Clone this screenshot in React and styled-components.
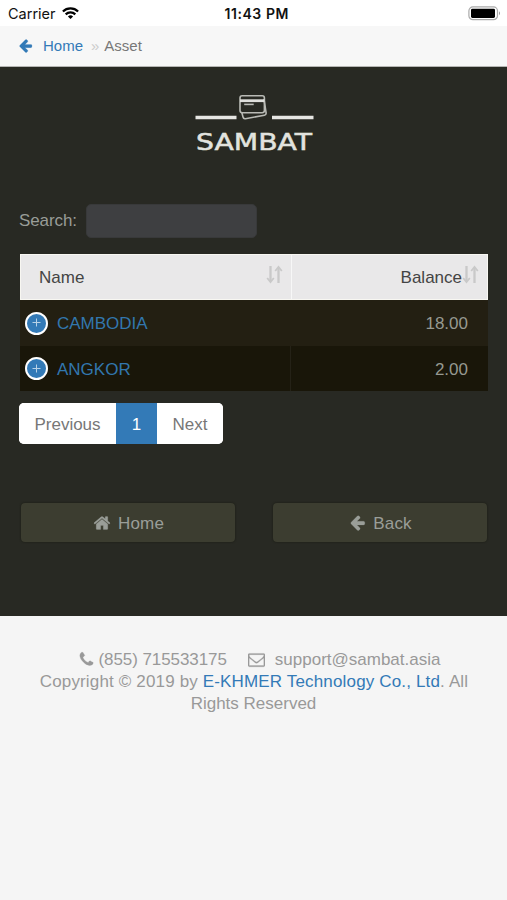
import React from "react";
import styled, { createGlobalStyle } from "styled-components";

const GlobalStyle = createGlobalStyle`
  * { box-sizing: border-box; }
  body { margin: 0; background: #f5f5f5; }
`;

const Page = styled.div`
  width: 507px;
  min-height: 900px;
  background: #f5f5f5;
  color: #999;
  font-family: "Liberation Sans", Arial, sans-serif;
  font-size: 17px;
  line-height: 22px;
`;

const StatusBar = styled.header`
  display: grid;
  grid-template-columns: 1fr auto 1fr;
  align-items: center;
  height: 26px;
  padding: 1px 6px 0 8px;
  background: #fff;
  color: #111;
  font: 14.5px/20px Inter, sans-serif;
`;
const Carrier = styled.div`
  display: flex;
  align-items: center;
  gap: 6px;
`;
const Clock = styled.div`
  padding-left: 4px;
  font-size: 14px;
  font-weight: 600;
  letter-spacing: 0.55px;
  margin-right: -0.5px;
`;
const BatterySlot = styled.div`
  display: flex;
  justify-content: flex-end;
`;

const Breadcrumb = styled.nav`
  display: flex;
  align-items: center;
  height: 41px;
  padding-left: 18px;
  background: #f7f7f7;
  border-bottom: 1px solid #b5b5b3;
  color: #777;
  font-size: 15px;
`;
const Crumb = styled.a`
  color: #337ab7;
  margin-left: 10px;
`;
const Separator = styled.span`
  color: #ccc;
  margin: 0 5px 0 8px;
`;

const Main = styled.main`
  height: 549px;
  padding: 25px 19px 0;
  background: #282923;
`;
const Brand = styled.div`
  display: flex;
  justify-content: center;
  height: 112px;
`;

const SearchRow = styled.label`
  display: flex;
  align-items: center;
  gap: 9px;
  height: 34px;
  color: #999d98;
  letter-spacing: -0.1px;
`;
const SearchInput = styled.input`
  width: 171px;
  height: 34px;
  padding: 0 12px;
  border: 1px solid #38393a;
  border-radius: 5px;
  background: #3e3f41;
  color: #ccc;
  font: inherit;
  outline: none;
`;

const Table = styled.div`
  width: 469px;
  margin-top: 16px;
  padding-left: 1px;
`;
const Row = styled.div`
  display: grid;
  grid-template-columns: 271px 197px;
  height: ${(p) => (p.$odd ? "46px" : "45px")};
  background: ${(p) => (p.$odd ? "#231f12" : "#191609")};
  color: #969990;
`;
const HeadRow = styled(Row)`
  height: 46px;
  background: #e9e8e9;
  border: 1px solid #f8f7f2;
  grid-template-columns: 271px 195px;
  color: #444;
`;
const Cell = styled.div`
  display: flex;
  align-items: center;
  padding: 2px 20px 0 5px;
  border-right: ${(p) => (p.$divided ? "1px solid #252217" : "0")};
  justify-content: ${(p) => (p.$end ? "flex-end" : "flex-start")};
`;
const HeadCell = styled(Cell)`
  justify-content: ${(p) => (p.$end ? "flex-end" : "space-between")};
  padding: 2px 8px 0 18px;
  border-right: ${(p) => (p.$end ? "0" : "1px solid #f7f7f7")};
`;
const SortMark = styled.svg`
  margin-bottom: 7px;
`;
const Expand = styled.span`
  display: flex;
  width: 23px;
  height: 23px;
  align-items: center;
  justify-content: center;
  border: 2.5px solid #fff;
  border-radius: 50%;
  background: #337ab7;
  margin: 0 9px 2px 0;
`;
const Link = styled.a`
  color: ${(p) => (p.$dim ? "#3277ae" : "#337ab7")};
`;

const Pagination = styled.div`
  display: flex;
  width: 204px;
  height: 41px;
  margin-top: 12px;
  overflow: hidden;
  border-radius: 5px;
  background: #fff;
`;
const PageButton = styled.button`
  width: ${(p) => p.$width}px;
  padding: 2px 0 0;
  border: 0;
  background: ${(p) => (p.$active ? "#337ab7" : "#fff")};
  color: ${(p) => (p.$active ? "#fff" : "#777")};
  font: inherit;
`;

const Actions = styled.div`
  display: flex;
  justify-content: space-between;
  padding-left: 2px;
  padding-right: 1px;
  margin-top: 59px;
`;
const ActionButton = styled.button`
  display: flex;
  align-items: center;
  justify-content: center;
  gap: 7px;
  width: 214px;
  height: 39px;
  padding: 2px 0 0 1px;
  border: 0;
  border-radius: 4px;
  background: #3c3d30;
  box-shadow: 0 0 2px #171811;
  color: #9a9e98;
  font: inherit;
  letter-spacing: 0.2px;
`;

const Footer = styled.footer`
  padding: 33px 30px 0;
  text-align: center;
`;
const Contact = styled.div`
  display: flex;
  justify-content: center;
  align-items: center;
  height: 22px;
  padding-left: 11px;
`;
const Phone = styled.span`
  margin: 0 21px 0 4px;
  letter-spacing: -0.08px;
`;
const Mail = styled.span`
  margin-left: 10px;
`;
const Copyright = styled.div`
  padding-left: ${(p) => (p.$wide ? "1px" : "0")};
  letter-spacing: ${(p) => (p.$wide ? "0.155px" : "0")};
`;

const iconPaths = {
  home: "M1472 992v480q0 26-19 45t-45 19h-384v-384h-256v384h-384q-26 0-45-19t-19-45v-480q0-1 .5-3t.5-3l575-474 575 474q1 2 1 6zm223-69l-62 74q-8 9-21 11h-3q-13 0-21-7l-692-577-692 577q-12 8-24 7-13-2-21-11l-62-74q-8-10-7-23.5t11-21.5l719-599q32-26 76-26t76 26l244 204v-195q0-14 9-23t23-9h192q14 0 23 9t9 23v408l219 182q10 8 11 21.5t-7 23.5z",
  arrow: "M1664 896v128q0 53-32.5 90.5t-84.5 37.5h-704l293 294q38 36 38 90t-38 90l-75 76q-37 37-90 37-52 0-91-37l-651-652q-37-37-37-90 0-52 37-91l651-650q38-38 91-38 52 0 90 38l75 74q38 38 38 91t-38 91l-293 293h704q52 0 84.5 37.5t32.5 90.5z",
  phone: "M1600 1240q0 27-10 70.5t-21 68.5q-21 50-122 106-94 51-186 51-27 0-53-3.5t-57.5-12.5-47-14.5-55.5-20.5-49-18q-98-35-175-83-127-79-264-216t-216-264q-48-77-83-175-3-9-18-49t-20.5-55.5-14.5-47-12.5-57.5-3.5-53q0-92 51-186 56-101 106-122 25-11 68.5-21t70.5-10q14 0 21 3 18 6 53 76 11 19 30 54t35 63.5 31 53.5q3 4 17.5 25t21.5 35.5 7 28.5q0 20-28.5 50t-62 55-62 53-28.5 46q0 9 5 22.5t8.5 20.5 14 24 11.5 19q76 137 174 235t235 174q2 1 19 11.5t24 14 20.5 8.5 22.5 5q18 0 46-28.5t53-62 55-62 50-28.5q14 0 28.5 7t35.5 21.5 25 17.5q25 15 53.5 31t63.5 35 54 30q70 35 76 53 3 7 3 21z",
  envelope: "M1664 1504v-768q-32 36-69 66-268 206-426 338-51 43-83 67t-86.5 48.5-102.5 24.5h-2q-48 0-102.5-24.5t-86.5-48.5-83-67q-158-132-426-338-37-30-69-66v768q0 13 9.5 22.5t22.5 9.5h1472q13 0 22.5-9.5t9.5-22.5zm0-1051v-24.5l-.5-13-3-12.5-5.5-9-9-7.5-14-2.5h-1472q-13 0-22.5 9.5t-9.5 22.5q0 168 147 284 193 152 401 317 6 5 35 29.5t46 37.5 44.5 31.5 50.5 27.5 43 9h2q20 0 43-9t50.5-27.5 44.5-31.5 46-37.5 35-29.5q208-165 401-317 54-43 100.5-115.5t46.5-131.5zm128-37v1088q0 66-47 113t-113 47h-1472q-66 0-113-47t-47-113v-1088q0-66 47-113t113-47h1472q66 0 113 47t47 113z",
};

const Glyph = styled.svg`
  flex: none;
  margin-bottom: 2px;
`;

const Icon = ({ name, size }) => (
  <Glyph width={size} height={size} viewBox="0 0 1792 1792" fill="currentColor" stroke="currentColor" strokeWidth="24">
    <path d={iconPaths[name]} />
  </Glyph>
);

const BackLink = styled.a`
  display: flex;
  color: #337ab7;
`;

const Wifi = () => (
  <svg width="17" height="13" viewBox="0 0 17 13" fill="none" stroke="#000" strokeWidth="2.2">
    <path d="M.9 4.5a10.8 10.8 0 0 1 15.2 0M3.7 7.4a6.8 6.8 0 0 1 9.6 0" />
    <path d="M8.5 12.1 5.9 9.5a3.7 3.7 0 0 1 5.2 0z" fill="#000" stroke="none" />
  </svg>
);

const Battery = () => (
  <svg width="33" height="16" viewBox="0 0 33 16">
    <rect x=".9" y=".9" width="28.6" height="12.8" rx="4" fill="#fff" stroke="#aaa" strokeWidth="1.2" />
    <rect x="3" y="2.7" width="24" height="9.2" rx="1.4" fill="#000" />
    <path d="M31 5.3q2 1.8 0 4z" fill="#999" />
  </svg>
);

const Sort = () => (
  <SortMark width="17" height="19" viewBox="0 0 17 19" fill="none" stroke="#c9c9c9">
    <path d="M4.5 1v15M12.5 18V3" strokeWidth="2.3" />
    <path d="M1.2 13l3.3 4L7.8 13M9.2 6l3.3-4L15.8 6" strokeWidth="1.8" />
  </SortMark>
);

const Plus = () => (
  <svg width="10" height="10" viewBox="0 0 10 10" stroke="#b8d2e7" strokeWidth="1">
    <path d="M.5 4.5h8M4.5 .5v8" />
  </svg>
);

const Logo = () => (
  <svg width="120" height="62" viewBox="0 0 120 62">
    <path d="M1.5 25.5h41M78 25.5h41.5" stroke="#e6e6e3" strokeWidth="3.4" />
    <g fill="none" stroke="#b9bab5" strokeWidth="1.6" strokeLinejoin="round">
      <path d="M47.8 20.5 49 25q.4 2 2.4 1.7l19-3.5q2-.4 1.7-2.4L70 7" />
      <rect x="46" y="3.7" width="24.4" height="17.1" rx="2.2" />
      <path d="M50.2 12.4h9.5" />
    </g>
    <path d="M46 8.7h24.4" stroke="#dfdfdc" strokeWidth="2.8" />
    <text x="2" y="58" textLength="116" lengthAdjust="spacingAndGlyphs" fill="#e2e3df" stroke="#e2e3df" strokeWidth=".5" fontFamily="DejaVu Sans, sans-serif" fontSize="22.5">
      SAMBAT
    </text>
  </svg>
);

const accounts = [
  { name: "CAMBODIA", balance: "18.00" },
  { name: "ANGKOR", balance: "2.00" },
];

export default function App() {
  return (
    <Page>
      <GlobalStyle />
      <StatusBar>
        <Carrier>Carrier <Wifi /></Carrier>
        <Clock>11:43 PM</Clock>
        <BatterySlot><Battery /></BatterySlot>
      </StatusBar>
      <Breadcrumb>
        <BackLink><Icon name="arrow" size={15} /></BackLink>
        <Crumb>Home</Crumb>
        <Separator>»</Separator>
        <span>Asset</span>
      </Breadcrumb>
      <Main>
        <Brand><Logo /></Brand>
        <SearchRow>Search:<SearchInput type="search" /></SearchRow>
        <Table>
          <HeadRow>
            <HeadCell>Name<Sort /></HeadCell>
            <HeadCell $end>Balance<Sort /></HeadCell>
          </HeadRow>
          {accounts.map((account, i) => (
            <Row key={account.name} $odd={i % 2 === 0}>
              <Cell $divided={i % 2 === 1}>
                <Expand><Plus /></Expand>
                <Link $dim>{account.name}</Link>
              </Cell>
              <Cell $end>{account.balance}</Cell>
            </Row>
          ))}
        </Table>
        <Pagination>
          <PageButton $width={97}>Previous</PageButton>
          <PageButton $width={41} $active>1</PageButton>
          <PageButton $width={66}>Next</PageButton>
        </Pagination>
        <Actions>
          <ActionButton><Icon name="home" size={18} />Home</ActionButton>
          <ActionButton><Icon name="arrow" size={17} />Back</ActionButton>
        </Actions>
      </Main>
      <Footer>
        <Contact>
          <Icon name="phone" size={17} />
          <Phone>(855) 715533175</Phone>
          <Icon name="envelope" size={17} />
          <Mail>support@sambat.asia</Mail>
        </Contact>
        <Copyright $wide>
          Copyright © 2019 by <Link>E-KHMER Technology Co., Ltd</Link>. All
        </Copyright>
        <Copyright>Rights Reserved</Copyright>
      </Footer>
    </Page>
  );
}
